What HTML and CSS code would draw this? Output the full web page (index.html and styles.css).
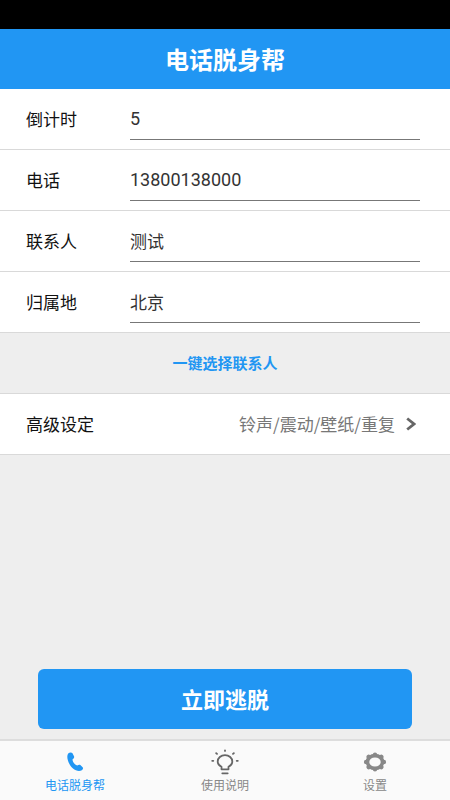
FILE: index.html
```html
<!DOCTYPE html>
<html lang="zh-CN">
<head>
<meta charset="utf-8">
<meta name="viewport" content="width=device-width, initial-scale=1">
<title>电话脱身帮</title>
<link rel="stylesheet" href="styles.css">
</head>
<body>
<div class="status"></div>
<header class="header"><h1 class="title">电话脱身帮</h1></header>
<main class="main">
  <form class="form">
    <div class="row">
      <label class="label" for="countdown">倒计时</label>
      <input class="field field-number" id="countdown" type="text" value="5">
    </div>
    <div class="row">
      <label class="label" for="phone">电话</label>
      <input class="field field-number" id="phone" type="tel" value="13800138000">
    </div>
    <div class="row">
      <label class="label" for="contact">联系人</label>
      <input class="field" id="contact" type="text" value="测试">
    </div>
    <div class="row">
      <label class="label" for="place">归属地</label>
      <input class="field" id="place" type="text" value="北京">
    </div>
  </form>
  <button class="pick" type="button">一键选择联系人</button>
  <button class="advanced" type="button">
    <span>高级设定</span>
    <span class="summary">铃声/震动/壁纸/重复</span>
    <svg class="chevron" viewBox="0 0 10 14" aria-hidden="true"><path d="M1.200 1.500 8 7l-6.800 5.500"/></svg>
  </button>
  <button class="escape" type="button">立即逃脱</button>
</main>
<nav class="tabs">
  <a class="tab tab-active" href="#home">
    <svg class="icon" viewBox="0 0 30 28" aria-hidden="true">
      <path fill="currentColor" d="M8.200 5.400C9.400 4.400 11.700 4.100 12.500 5.300l1.500 2.900c.5 1.200 0 2.200-1.400 3-.4 2.300 2.300 5.700 4.600 6.300 1.500-.8 2.500-.9 3.400-.2l2 1.900c.8.900.6 2.200-.8 3-2.300 1.500-5.800.9-9.100-2C8.500 16.500 5.800 8.600 8.200 5.400z"/>
    </svg>
    <span>电话脱身帮</span>
  </a>
  <a class="tab" href="#help">
    <svg class="icon icon-bulb" viewBox="0 0 30 28" aria-hidden="true">
      <g fill="none" stroke="currentColor" stroke-width="1.800" stroke-linecap="round" stroke-linejoin="round">
        <path d="M11.500 21.300v-2.500c-2.300-1.200-3.800-3-3.800-5.300 0-3.600 3.200-6.300 7.300-6.300s7.300 2.700 7.300 6.300c0 2.300-1.500 4.100-3.800 5.300v2.500z"/>
        <path d="M12.300 25.300h5.400M15 2.300v.6M6.200 5.200l.8.700M23.800 5.200l-.8.700M2.200 12.800h1.100M26.700 12.800h1.100"/>
      </g>
    </svg>
    <span>使用说明</span>
  </a>
  <a class="tab" href="#settings">
    <svg class="icon" viewBox="0 0 30 28" aria-hidden="true">
      <g fill="none" stroke="currentColor">
        <ellipse cx="15" cy="14" rx="7.500" ry="6.400" stroke-width="3.600"/>
        <path stroke-width="4.400" stroke-linecap="round" d="M15 6.700v.2M15 21.100v.2M6.100 14h.2M23.700 14h.2M8.700 8.900l.2.200M21.300 8.900l-.2.200M8.700 19.100l.2-.2M21.300 19.100l-.2-.2"/>
      </g>
    </svg>
    <span>设置</span>
  </a>
</nav>
</body>
</html>
```
FILE: styles.css
```css
* {
  box-sizing: border-box;
}

body {
  margin: 0;
  min-height: 100vh;
  display: flex;
  flex-direction: column;
  background: #eee;
  color: #111;
  font-family: "Noto Sans CJK SC", sans-serif;
  font-size: 17px;
  line-height: 24px;
}

button,
input {
  font: inherit;
  color: inherit;
  border: 0;
  border-radius: 0;
  padding: 0;
  background: none;
}

.status {
  height: 29px;
  background: #000;
}

.header {
  padding: 15px 16px;
  background: #2196f3;
  color: #fff;
  text-align: center;
}

.title {
  margin: 0;
  font-size: 24px;
  line-height: 30px;
  font-weight: 700;
}

.main {
  flex: 1;
  display: flex;
  flex-direction: column;
}

.row {
  display: grid;
  grid-template-columns: 104px 1fr;
  align-items: center;
  padding: 9px 30px 9px 26px;
  border-bottom: 1px solid #d9d9d9;
  background: #fff;
}

.field {
  width: 100%;
  min-width: 0;
  height: 42px;
  padding-bottom: 1px;
  border-bottom: 1px solid #777;
  color: #333;
  outline: 0;
}

.field-number {
  font-family: Roboto, "Noto Sans CJK SC", sans-serif;
  font-size: 18px;
}

.pick {
  padding: 18px;
  color: #2196f3;
  font-size: 15px;
  font-weight: 700;
}

.advanced {
  display: flex;
  align-items: center;
  padding: 18px 34px 18px 26px;
  border: solid #d9d9d9;
  border-width: 1px 0;
  background: #fff;
}

.summary {
  margin-left: auto;
  color: #777;
}

.chevron {
  width: 10px;
  height: 14px;
  margin-left: 11px;
  fill: none;
  stroke: #666;
  stroke-width: 2.8;
}

.escape {
  margin: auto 38px 10px;
  padding: 14px 16px 16px;
  border-radius: 6px;
  background: #2196f3;
  color: #fff;
  font-size: 22px;
  font-weight: 700;
  line-height: 30px;
}

.tabs {
  display: grid;
  grid-template-columns: repeat(3, 1fr);
  padding: 7px 0 6px;
  border-top: 2px solid #ddd;
  background: #fafafa;
}

.tab {
  display: flex;
  flex-direction: column;
  align-items: center;
  color: #888;
  font-size: 12px;
  line-height: 18px;
  text-decoration: none;
}

.tab-active {
  color: #2196f3;
}

.icon {
  width: 30px;
  height: 28px;
}

.icon-bulb {
  color: #666;
}
```
